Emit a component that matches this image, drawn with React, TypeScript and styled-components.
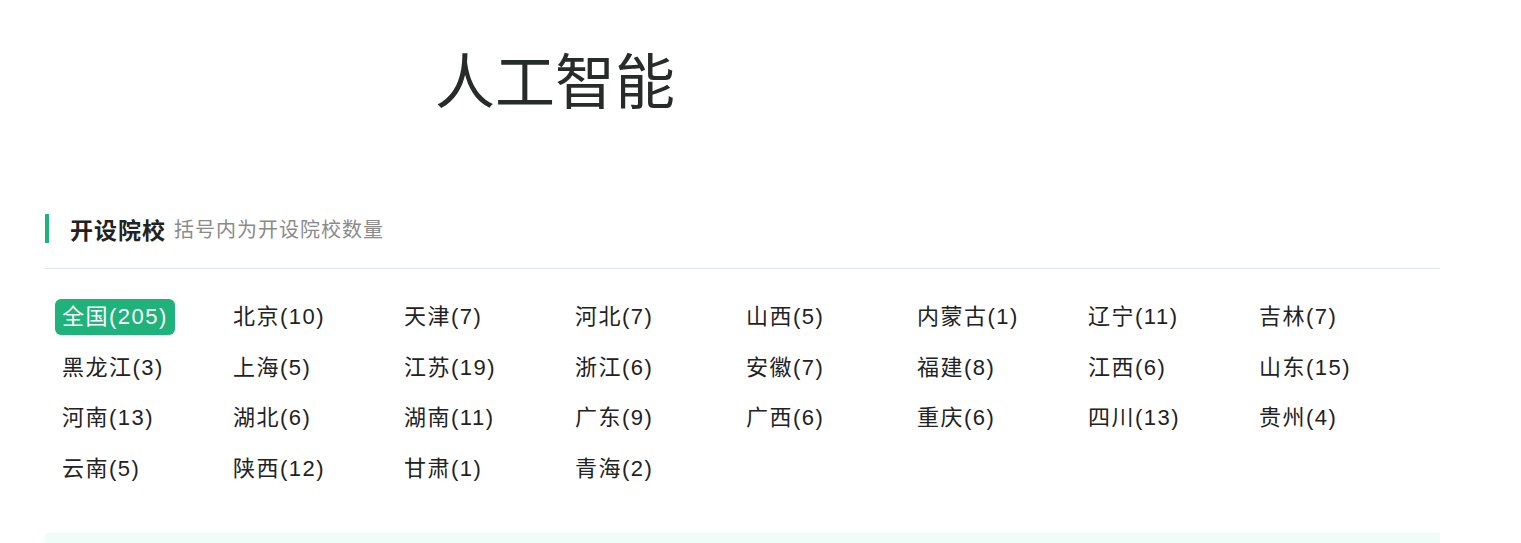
import React from 'react';
import styled, { createGlobalStyle } from 'styled-components';

interface Province {
    name: string;
    count: number;
}

const provinces: Province[] = [
    { name: '全国', count: 205 },
    { name: '北京', count: 10 },
    { name: '天津', count: 7 },
    { name: '河北', count: 7 },
    { name: '山西', count: 5 },
    { name: '内蒙古', count: 1 },
    { name: '辽宁', count: 11 },
    { name: '吉林', count: 7 },
    { name: '黑龙江', count: 3 },
    { name: '上海', count: 5 },
    { name: '江苏', count: 19 },
    { name: '浙江', count: 6 },
    { name: '安徽', count: 7 },
    { name: '福建', count: 8 },
    { name: '江西', count: 6 },
    { name: '山东', count: 15 },
    { name: '河南', count: 13 },
    { name: '湖北', count: 6 },
    { name: '湖南', count: 11 },
    { name: '广东', count: 9 },
    { name: '广西', count: 6 },
    { name: '重庆', count: 6 },
    { name: '四川', count: 13 },
    { name: '贵州', count: 4 },
    { name: '云南', count: 5 },
    { name: '陕西', count: 12 },
    { name: '甘肃', count: 1 },
    { name: '青海', count: 2 },
];

const GlobalStyle = createGlobalStyle`
  body {
    margin: 0;
    background: #fff;
    font-family: "Liberation Sans", "Noto Sans CJK SC", sans-serif;
    color: #222;
  }
`;

const Page = styled.div`
  width: 1395px;
  margin-left: 45px;
`;

const Title = styled.h1`
  margin: 0;
  padding: 52px 0 0 390px;
  font-size: 60px;
  font-weight: 400;
  line-height: 64px;
  color: #272b2a;
`;

const SectionHeader = styled.div`
  display: flex;
  align-items: center;
  height: 29px;
  margin-top: 98px;
  padding-left: 21px;
  border-left: 4px solid #1fb27a;
`;

const SectionTitle = styled.span`
  font-size: 23px;
  font-weight: 700;
  letter-spacing: 1px;
  color: #222;
`;

const SectionHint = styled.span`
  margin-left: 8px;
  font-size: 20px;
  letter-spacing: 1px;
  color: #8a8a8a;
`;

const Divider = styled.div`
  height: 1px;
  margin-top: 25px;
  background: #dfe7ee;
`;

const Grid = styled.div`
  display: grid;
  grid-template-columns: repeat(8, 171px);
  row-gap: 14.7px;
  padding: 30px 0 0 10px;
`;

const Item = styled.span<{ $active?: boolean }>`
  justify-self: start;
  height: 36px;
  padding: 0 7px;
  border-radius: 6px;
  font-size: 22px;
  letter-spacing: 1.5px;
  line-height: 36px;
  white-space: nowrap;
  cursor: pointer;
  color: ${p => (p.$active ? '#fff' : '#222')};
  background: ${p => (p.$active ? '#1fb27a' : 'transparent')};
`;

const Band = styled.div`
  height: 10px;
  margin-top: 46px;
  background: #eefdf7;
`;

const App: React.FC = () => {
    return (
        <>
            <GlobalStyle />
            <Page>
                <Title>人工智能</Title>
                <SectionHeader>
                    <SectionTitle>开设院校</SectionTitle>
                    <SectionHint>括号内为开设院校数量</SectionHint>
                </SectionHeader>
                <Divider />
                <Grid>
                    {provinces.map((p, index) => (
                        <Item key={p.name} $active={index === 0}>
                            {p.name}({p.count})
                        </Item>
                    ))}
                </Grid>
                <Band />
            </Page>
        </>
    );
};

export default App;
